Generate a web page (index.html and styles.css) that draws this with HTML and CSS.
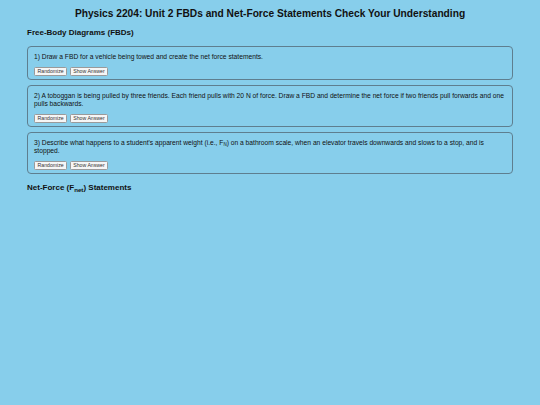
FILE: index.html
```html
<!DOCTYPE html>
<html>
<head>
<meta charset="utf-8">
<link rel="stylesheet" href="styles.css">
</head>
<body>
<div class="page">
  <h1 class="title">Physics 2204: Unit 2 FBDs and Net-Force Statements Check Your Understanding</h1>
  <h2 class="section">Free-Body Diagrams (FBDs)</h2>
  <div class="card">
    <p class="q">1) Draw a FBD for a vehicle being towed and create the net force statements.</p>
    <div class="btns"><button class="btn">Randomize</button><button class="btn">Show Answer</button></div>
  </div>
  <div class="card">
    <p class="q">2) A toboggan is being pulled by three friends. Each friend pulls with 20 N of force. Draw a FBD and determine the net force if two friends pull forwards and one pulls backwards.</p>
    <div class="btns"><button class="btn">Randomize</button><button class="btn">Show Answer</button></div>
  </div>
  <div class="card">
    <p class="q">3) Describe what happens to a student's apparent weight (i.e., F<sub>N</sub>) on a bathroom scale, when an elevator travels downwards and slows to a stop, and is stopped.</p>
    <div class="btns"><button class="btn">Randomize</button><button class="btn">Show Answer</button></div>
  </div>
  <h2 class="section section2">Net-Force (F<sub>net</sub>) Statements</h2>
</div>
</body>
</html>
```
FILE: styles.css
```css
html, body {
  margin: 0;
  padding: 0;
  background: #87ceeb;
  height: 100%;
}
.page {
  padding: 7px 27px 0;
  font-family: "Liberation Sans", Arial, sans-serif;
  color: #111;
}
.title {
  margin: 0;
  font-size: 10.2px;
  line-height: 14px;
  text-align: center;
  font-weight: bold;
}
.section {
  margin: 7px 0 8px;
  font-size: 8px;
  line-height: 10px;
  font-weight: bold;
}
.section2 {
  margin-top: 9px;
}
.section sub {
  font-size: 6.2px;
  vertical-align: -2px;
  line-height: 0;
}
.card {
  border: 1.5px solid #5e7e8f;
  border-radius: 4px;
  padding: 6px 6px 3.5px;
  margin-bottom: 5px;
}
.q {
  margin: 0 0 5.5px;
  font-size: 6.7px;
  line-height: 8px;
}
.q sub {
  font-size: 4.5px;
  vertical-align: -1px;
  line-height: 0;
}
.btns {
  display: flex;
  gap: 2.5px;
}
.btn {
  font-family: "Liberation Sans", Arial, sans-serif;
  font-size: 5.2px;
  height: 9px;
  line-height: 7px;
  padding: 0 2.5px;
  margin: 0;
  border: 1px solid #9a9a9a;
  border-radius: 1.5px;
  background: #f6f6f6;
  color: #333;
}
```
